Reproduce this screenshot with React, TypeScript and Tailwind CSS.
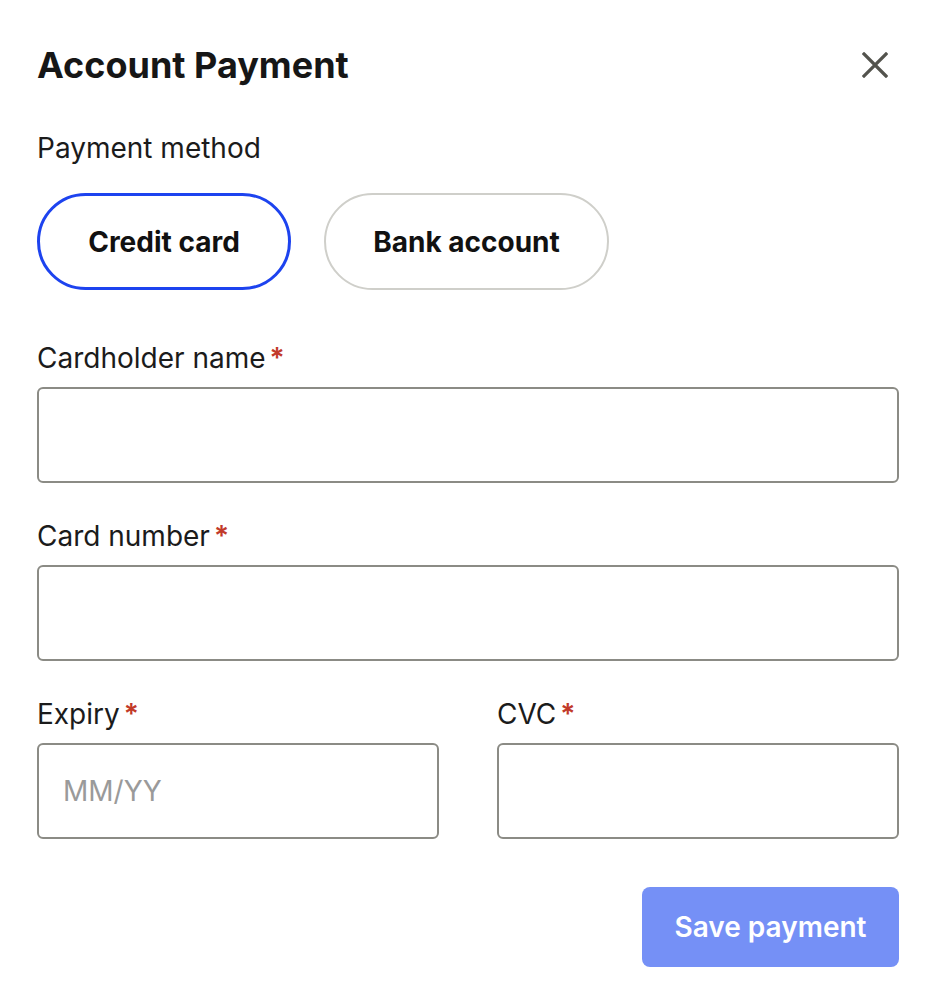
import React from "react";

function Label({ children }: { children: React.ReactNode }) {
  return (
    <div className="flex items-baseline text-[28px] leading-[34px] text-[#1b1b1b]">
      <span>{children}</span>
      <span className="ml-[4px] text-[28px] text-[#c23a2a] font-semibold">*</span>
    </div>
  );
}

function Input({ placeholder }: { placeholder?: string }) {
  return (
    <input
      placeholder={placeholder}
      className="h-[96px] w-full rounded-[6px] border-2 border-[#8b8b85] bg-white px-[24px] text-[28px] text-[#1b1b1b] outline-none placeholder:text-[#9a9a9a]"
    />
  );
}

export default function App() {
  return (
    <div
      className="w-[938px] min-h-[1006px] bg-white pl-[37px] pr-[39px] pt-[43px]"
      style={{ fontFamily: "Inter, 'Noto Sans', sans-serif" }}
    >
      <div className="flex items-center justify-between">
        <h1 className="text-[36px] leading-[44px] font-bold text-[#161616]">Account Payment</h1>
        <button className="mr-[10px] flex h-[28px] w-[28px] items-center justify-center text-[#53534d]">
          <svg width="26" height="26" viewBox="0 0 26 26" fill="none">
            <path d="M2 2 L24 24 M24 2 L2 24" stroke="currentColor" strokeWidth="3.2" strokeLinecap="square" />
          </svg>
        </button>
      </div>

      <div className="mt-[44px] text-[28px] leading-[34px] text-[#1b1b1b]">Payment method</div>

      <div className="mt-[28px] flex gap-[33px]">
        <button className="flex h-[97px] w-[254px] items-center justify-center rounded-full border-[3px] border-[#1d43ef] text-[28px] font-bold text-[#111]">
          Credit card
        </button>
        <button className="flex h-[97px] w-[285px] items-center justify-center rounded-full border-2 border-[#cfcfca] text-[28px] font-bold text-[#111]">
          Bank account
        </button>
      </div>

      <div className="mt-[51px] flex flex-col gap-[12px]">
        <Label>Cardholder name</Label>
        <Input />
      </div>

      <div className="mt-[36px] flex flex-col gap-[12px]">
        <Label>Card number</Label>
        <Input />
      </div>

      <div className="mt-[36px] grid grid-cols-2 gap-[58px]">
        <div className="flex flex-col gap-[12px]">
          <Label>Expiry</Label>
          <Input placeholder="MM/YY" />
        </div>
        <div className="flex flex-col gap-[12px]">
          <Label>CVC</Label>
          <Input />
        </div>
      </div>

      <div className="mt-[48px] flex justify-end">
        <button className="h-[80px] w-[257px] rounded-[8px] bg-[#7590f6] text-[28px] font-semibold text-white">
          Save payment
        </button>
      </div>
    </div>
  );
}
